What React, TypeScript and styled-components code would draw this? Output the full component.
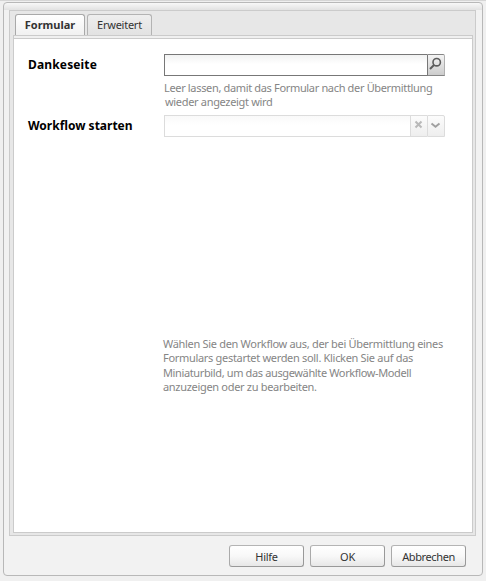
import React from "react";
import styled, { createGlobalStyle } from "styled-components";

const Global = createGlobalStyle`
  * { box-sizing: border-box; }
  body { margin: 0; background: #f0f0f0; font-family: "Noto Sans", "Open Sans", sans-serif; }
`;

const Page = styled.div`
  width: 486px;
  height: 581px;
  padding: 2px 3px 5px;
  border-top: 1px solid #d6d6d6;
  background: #f0f0f0;
`;

const Dialog = styled.div`
  width: 480px;
  height: 574px;
  margin-top: -1px;
  display: flex;
  flex-direction: column;
  border: 1px solid #b8b8b8;
  border-radius: 4px;
  background: linear-gradient(#f8f8f8, #e2e2e2 7px, #f2f2f2 7px);
  padding: 7px 6px 0 5px;
`;

const Panel = styled.div`
  height: 526px;
  display: flex;
  flex-direction: column;
  border: 1px solid #cbcbcb;
  background: #e7e7e7;
  padding: 3px 2px 2px 3px;
`;

const TabStrip = styled.div`
  height: 21px;
  display: flex;
  gap: 2px;
  padding-left: 2px;
`;

const Tab = styled.div<{ $active?: boolean; $width: number; $spacing: number }>`
  width: ${(p) => p.$width}px;
  height: ${(p) => (p.$active ? 22 : 21)}px;
  border: 1px solid ${(p) => (p.$active ? "#a9a9a9" : "#b3b3b3")};
  border-bottom: 0;
  border-radius: 3px 3px 0 0;
  background: ${(p) => (p.$active ? "linear-gradient(#ffffff, #f0f0f0)" : "linear-gradient(#eeeeee, #e2e2e2)")};
  color: #333;
  font-size: 11px;
  font-weight: ${(p) => (p.$active ? 700 : 400)};
  letter-spacing: ${(p) => p.$spacing}px;
  line-height: 20px;
  text-align: center;
  white-space: nowrap;
`;

const Body = styled.div`
  flex: 1;
  border: 1px solid #cbcbcb;
  background: #fff;
`;

const BodyEdge = styled.div`
  height: 3px;
  background: #f0f0f0;
  border-bottom: 1px solid #cbcbcb;
`;

const Form = styled.div`
  display: grid;
  grid-template-columns: 135px 282px;
  padding: 15px 0 0 14px;
`;

const Label = styled.div<{ $spacing: number }>`
  color: #000;
  font-size: 12px;
  font-weight: 700;
  line-height: 22px;
  letter-spacing: ${(p) => p.$spacing}px;
  white-space: nowrap;
`;

const Field = styled.div<{ $height: number }>`
  height: ${(p) => p.$height}px;
`;

const InputRow = styled.div`
  display: flex;
  height: 22px;
  width: 281px;
  margin-left: 1px;
`;

const Input = styled.div<{ $disabled?: boolean }>`
  flex: 1;
  border: 1px solid ${(p) => (p.$disabled ? "#dcdcdc" : "#777")};
  border-right: 0;
  background: linear-gradient(${(p) => (p.$disabled ? "#f9f9f9" : "#f1f2f2")}, #fff 9px);
`;

const Trigger = styled.div<{ $disabled?: boolean; $last?: boolean }>`
  width: ${(p) => (p.$last ? 18 : 17)}px;
  border: 1px solid ${(p) => (p.$disabled ? "#dcdcdc" : "#858585")};
  border-left-color: ${(p) => (p.$disabled ? "#dcdcdc" : "#777")};
  border-right: ${(p) => (p.$last ? `1px solid ${p.$disabled ? "#dcdcdc" : "#b0b0b0"}` : "0")};
  border-radius: 0 ${(p) => (p.$last ? 2 : 0)}px 0 0;
  background: ${(p) => (p.$disabled ? "linear-gradient(#fcfcfc, #eeeeee)" : "linear-gradient(#f4f4f4, #cccccc)")};
  svg { display: block; }
`;

const Hint = styled.div<{ $top: number }>`
  padding-top: ${(p) => p.$top}px;
  color: #858585;
  font-size: 11px;
  line-height: 14.4px;
  white-space: nowrap;
`;

const HintLine = styled.div<{ $spacing: number; $indent?: number }>`
  letter-spacing: ${(p) => p.$spacing}px;
  padding-left: ${(p) => p.$indent ?? 0}px;
`;

const Footer = styled.div`
  display: flex;
  justify-content: flex-end;
  gap: 6px;
  padding: 9px 10px 0 0;
`;

const Button = styled.button<{ $spacing: number }>`
  width: 75px;
  height: 22px;
  padding: 1px 0 0;
  border: 1px solid #999;
  border-top-color: #b4b4b4;
  border-left-color: #aaa;
  border-radius: 3px;
  background: linear-gradient(#ffffff, #f8f8f8 50%, #e7e7e7);
  color: #333;
  font-family: inherit;
  font-size: 11px;
  line-height: 20px;
  letter-spacing: ${(p) => p.$spacing}px;
`;

const SearchIcon = () => (
  <svg width="16" height="20" viewBox="0 0 16 20" fill="none" stroke="#5c5c5c">
    <circle cx="8.7" cy="7.2" r="3.7" strokeWidth="1.6" />
    <path d="M6 10L2 14" strokeWidth="2" />
  </svg>
);

const ClearIcon = () => (
  <svg width="16" height="20" viewBox="0 0 16 20" fill="none" stroke="#b9b9b9" strokeWidth="2">
    <path d="M4.5 5.5L10.5 11.5M10.5 5.5L4.5 11.5" />
  </svg>
);

const DownIcon = () => (
  <svg width="16" height="20" viewBox="0 0 16 20" fill="none" stroke="#a0a0a0" strokeWidth="2">
    <path d="M3.5 7.5L7.5 10.7L11.5 7.5" />
  </svg>
);

export default function App() {
  return (
    <Page>
      <Global />
      <Dialog>
        <Panel>
          <TabStrip>
            <Tab $active $width={70} $spacing={0}>Formular</Tab>
            <Tab $width={65} $spacing={-0.25}>Erweitert</Tab>
          </TabStrip>
          <Body>
            <BodyEdge />
            <Form>
              <Label $spacing={0.15}>Dankeseite</Label>
              <Field $height={61}>
                <InputRow>
                  <Input />
                  <Trigger $last><SearchIcon /></Trigger>
                </InputRow>
                <Hint $top={5}>
                  <HintLine $spacing={-0.34} $indent={1}>Leer lassen, damit das Formular nach der Übermittlung</HintLine>
                  <HintLine $spacing={-0.32} $indent={2}>wieder angezeigt wird</HintLine>
                </Hint>
              </Field>
              <Label $spacing={0}>Workflow starten</Label>
              <Field $height={290}>
                <InputRow>
                  <Input $disabled />
                  <Trigger $disabled><ClearIcon /></Trigger>
                  <Trigger $disabled $last><DownIcon /></Trigger>
                </InputRow>
                <Hint $top={200}>
                  <HintLine $spacing={-0.31}>Wählen Sie den Workflow aus, der bei Übermittlung eines</HintLine>
                  <HintLine $spacing={-0.31}>Formulars gestartet werden soll. Klicken Sie auf das</HintLine>
                  <HintLine $spacing={-0.37}>Miniaturbild, um das ausgewählte Workflow-Modell</HintLine>
                  <HintLine $spacing={-0.31}>anzuzeigen oder zu bearbeiten.</HintLine>
                </Hint>
              </Field>
            </Form>
          </Body>
        </Panel>
        <Footer>
          <Button $spacing={-0.3}>Hilfe</Button>
          <Button $spacing={-0.2}>OK</Button>
          <Button $spacing={-0.38}>Abbrechen</Button>
        </Footer>
      </Dialog>
    </Page>
  );
}
